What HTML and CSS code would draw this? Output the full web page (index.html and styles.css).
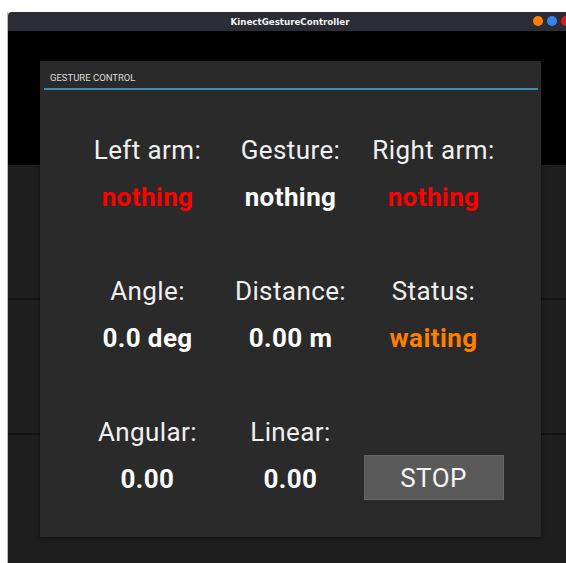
FILE: index.html
```html
<!DOCTYPE html>
<html>
<head>
<meta charset="utf-8">
<title>KinectGestureController</title>
<link rel="stylesheet" href="styles.css">
</head>
<body>
<div class="window">
  <div class="titlebar">
    <span class="title">KinectGestureController</span>
    <div class="controls">
      <span class="dot dot-min"></span>
      <span class="dot dot-max"></span>
      <span class="dot dot-close"></span>
    </div>
  </div>
  <div class="client">
    <div class="band band-top"></div>
    <div class="band band-panel"></div>
    <div class="band band-panel"></div>
    <div class="band band-panel"></div>

    <section class="card">
      <header class="card-header">GESTURE CONTROL</header>
      <div class="card-rule"></div>
      <div class="grid">
        <div class="cell">
          <span class="label">Left arm:</span>
          <span class="value red">nothing</span>
        </div>
        <div class="cell">
          <span class="label">Gesture:</span>
          <span class="value">nothing</span>
        </div>
        <div class="cell">
          <span class="label">Right arm:</span>
          <span class="value red">nothing</span>
        </div>

        <div class="cell">
          <span class="label">Angle:</span>
          <span class="value">0.0 deg</span>
        </div>
        <div class="cell">
          <span class="label">Distance:</span>
          <span class="value">0.00 m</span>
        </div>
        <div class="cell">
          <span class="label">Status:</span>
          <span class="value orange">waiting</span>
        </div>

        <div class="cell">
          <span class="label">Angular:</span>
          <span class="value">0.00</span>
        </div>
        <div class="cell">
          <span class="label">Linear:</span>
          <span class="value">0.00</span>
        </div>
        <div class="cell">
          <span class="label"></span>
          <button class="stop">STOP</button>
        </div>
      </div>
    </section>
  </div>
</div>
</body>
</html>
```
FILE: styles.css
```css
html, body {
  margin: 0;
  padding: 0;
  background: #ffffff;
  overflow: hidden;
  height: 563px;
}

.window {
  margin: 12px 0 0 7px;
  width: 566px;
  height: 551px;
  border-left: 1px solid #bdbdbd;
  box-sizing: border-box;
  display: flex;
  flex-direction: column;
}

.titlebar {
  position: relative;
  height: 19px;
  flex: none;
  background: #2c2d34;
  border-radius: 4px 4px 0 0;
  display: flex;
  align-items: center;
  justify-content: center;
}

.title {
  font-family: "DejaVu Sans", sans-serif;
  font-weight: bold;
  font-size: 8.7px;
  color: #f2f2f2;
  margin-left: -1px;
}

.controls {
  position: absolute;
  top: 4px;
  left: 525px;
  display: flex;
  gap: 4px;
}

.dot {
  width: 10px;
  height: 10px;
  border-radius: 50%;
}
.dot-min { background: #ff8207; }
.dot-max { background: #3b82f0; }
.dot-close { background: #e01b1b; }

.client {
  position: relative;
  flex: 1;
  background: #1e1e1e;
  display: flex;
  flex-direction: column;
}

.band-top {
  height: 134px;
  background: #000000;
}

.band-panel {
  height: 133px;
  background: #1e1e1e;
  border-bottom: 2px solid #141414;
}

.card {
  position: absolute;
  left: 32px;
  top: 30px;
  width: 501px;
  height: 476px;
  background: #2a2a2a;
  box-shadow: 0 1px 4px rgba(0, 0, 0, 0.55);
  font-family: Roboto, "Noto Sans", sans-serif;
  display: flex;
  flex-direction: column;
}

.card-header {
  padding: 11px 0 0 10px;
  height: 16px;
  font-size: 9.5px;
  color: #dcdcdc;
  line-height: 12px;
}

.card-rule {
  margin: 0 3px 0 4px;
  height: 2px;
  background: #3c8db4;
}

.grid {
  margin-top: 46px;
  display: grid;
  grid-template-columns: repeat(3, 143px);
  justify-content: center;
  row-gap: 66px;
}

.cell {
  display: flex;
  flex-direction: column;
  align-items: center;
}

.label {
  font-size: 26px;
  letter-spacing: 0.4px;
  line-height: 28px;
  height: 28px;
  color: #f0f0f0;
  white-space: nowrap;
}

.value {
  margin-top: 19px;
  font-size: 26px;
  letter-spacing: 0.4px;
  line-height: 28px;
  font-weight: bold;
  color: #ffffff;
  white-space: nowrap;
}

.red { color: #ff0000; }
.orange { color: #ff8000; }

.stop {
  margin-top: 9px;
  width: 140px;
  height: 45px;
  background: #5a5a5a;
  border: 1px solid #666666;
  border-radius: 0;
  color: #f4f4f4;
  font-family: Roboto, "Noto Sans", sans-serif;
  font-size: 26px;
  letter-spacing: 0.4px;
  padding: 0;
}
```
